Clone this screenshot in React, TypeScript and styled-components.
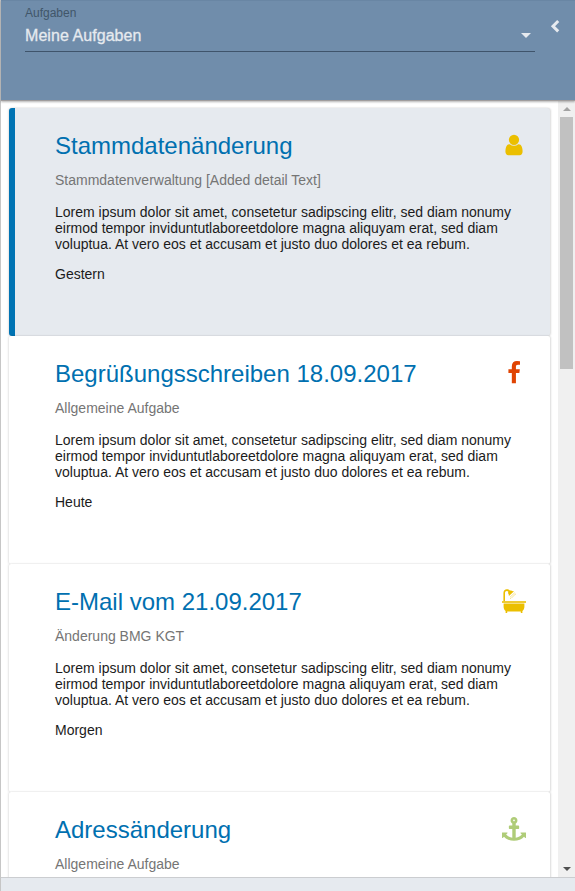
import React from "react";
import styled, { createGlobalStyle } from "styled-components";

const GlobalStyle = createGlobalStyle`
  *, *::before, *::after { box-sizing: border-box; }
  body { margin: 0; overflow: hidden; font-family: "Liberation Sans", Arial, sans-serif; }
`;

const Page = styled.div`
  display: flex;
  flex-direction: column;
  width: 575px;
  height: 891px;
  border-left: 1px solid #c6c6c6;
  background: #fff;
`;

const Header = styled.header`
  display: flex;
  flex: none;
  position: relative;
  height: 101px;
  padding-left: 24px;
  background: #708dab;
  border-top: 1px solid #6986a4;
  border-bottom: 1px solid #a09d9d;
  box-shadow: 0 1px 2px rgba(0, 0, 0, 0.3);
`;

const Select = styled.div`
  width: 510px;
  height: 51px;
  padding-top: 4px;
  border-bottom: 1px solid #3f546b;
`;

const SelectLabel = styled.div`
  font-size: 12px;
  line-height: 16px;
  color: #415669;
`;

const SelectValue = styled.div`
  display: flex;
  align-items: center;
  justify-content: space-between;
  height: 30px;
  padding-right: 4px;
  font-size: 16px;
  line-height: 20px;
  letter-spacing: 0.06px;
  color: #e6eaef;
  -webkit-text-stroke: 0.3px #e6eaef;
  svg { display: block; margin-bottom: 2px; }
`;

const Collapse = styled.button`
  width: 10px;
  height: 14px;
  margin: 18px 0 0 15px;
  padding: 0;
  border: 0;
  background: none;
  svg { display: block; }
`;

const Body = styled.main`
  display: flex;
  flex: none;
  height: 776px;
  overflow: hidden;
`;

const List = styled.div`
  width: 557px;
  height: 776px;
  padding: 7px 8px 0 8px;
  overflow: hidden;
`;

const Card = styled.article<{ $active?: boolean }>`
  display: flex;
  justify-content: space-between;
  height: 228px;
  padding: 22px 24px 0 ${(p) => (p.$active ? 40 : 46)}px;
  border-left: ${(p) => (p.$active ? "6px solid #0073b3" : "0")};
  border-radius: ${(p) => (p.$active ? "3px" : "2px")};
  background: ${(p) => (p.$active ? "#e6eaef" : "#fff")};
  box-shadow: 1px 0 2px rgba(0, 0, 0, 0.14), -1px 0 2px rgba(0, 0, 0, 0.1);
`;

const CardText = styled.div`
  flex: none;
  width: 466px;
`;

const Title = styled.h2`
  margin: 0;
  font-size: 24px;
  font-weight: 400;
  line-height: 32px;
  color: #0070b0;
  white-space: nowrap;
`;

const Category = styled.div`
  margin-top: 10px;
  font-size: 14px;
  line-height: 16px;
  color: #757575;
`;

const Description = styled.p`
  margin: 16px 0 14px;
  font-size: 14px;
  line-height: 16px;
  color: #1b1b1b;
  white-space: pre;
`;

const Due = styled.div`
  font-size: 14px;
  line-height: 16px;
  color: #1b1b1b;
`;

const IconSlot = styled.div<{ $color: string }>`
  flex: none;
  width: 24px;
  height: 24px;
  margin: 3px 0 0 -20px;
  color: ${(p) => p.$color};
  svg { display: block; overflow: visible; }
`;

const ScrollBar = styled.div`
  display: flex;
  flex-direction: column;
  align-items: center;
  width: 17px;
  height: 776px;
  background: #f0f0f0;
`;

const ScrollButton = styled.div`
  display: flex;
  flex: none;
  align-items: center;
  justify-content: center;
  width: 17px;
  height: 16px;
`;

const ScrollThumb = styled.div`
  width: 13px;
  height: 252px;
  margin-bottom: auto;
  background: #c1c1c1;
`;

const Footer = styled.footer`
  flex: 1;
  border-top: 1px solid #cbcdd0;
  background: #e6eaef;
`;

const Glyph = ({ d }: { d: string }) => (
  <svg width="24" height="24" viewBox="0 0 1792 1792" fill="currentColor">
    <path d={d} />
  </svg>
);

const UserIcon = () => (
  <Glyph d="M1536 1399q0 109-62.5 187t-150.5 78h-854q-88 0-150.5-78t-62.5-187q0-85 8.5-160.5t31.5-152 58.5-131 94-89 134.5-34.5q131 128 313 128t313-128q76 0 134.5 34.5t94 89 58.5 131 31.5 152 8.5 160.5zm-256-887q0 159-112.5 271.5t-271.5 112.5-271.5-112.5-112.5-271.5 112.5-271.5 271.5-112.5 271.5 112.5 112.5 271.5z" />
);

const FacebookIcon = () => (
  <Glyph d="M1343 12v264h-157q-86 0-116 36t-30 108v189h293l-39 296h-254v759h-306v-759h-255v-296h255v-218q0-186 104-288.5t277-102.5q147 0 228 12z" />
);

const AnchorIcon = () => (
  <Glyph d="M960 256q0-26-19-45t-45-19-45 19-19 45 19 45 45 19 45-19 19-45zm832 928v352q0 22-20 30-8 2-12 2-12 0-23-9l-93-93q-119 143-318.5 226.5t-429.5 83.5-429.5-83.5-318.5-226.5l-93 93q-9 9-23 9-4 0-12-2-20-8-20-30v-352q0-14 9-23t23-9h352q22 0 30 20 8 19-7 35l-100 100q67 91 189.5 153.5t271.5 82.5v-647h-192q-26 0-45-19t-19-45v-128q0-26 19-45t45-19h192v-163q-58-34-93-92.5t-35-128.5q0-106 75-181t181-75 181 75 75 181q0 70-35 128.5t-93 92.5v163h192q26 0 45 19t19 45v128q0 26-19 45t-45 19h-192v647q149-20 271.5-82.5t189.5-153.5l-100-100q-15-16-7-35 8-20 30-20h352q14 0 23 9t9 23z" />
);

const BathIcon = () => (
  <svg width="24" height="24" viewBox="0 0 24 24" fill="currentColor">
    <path d="M1.400 12.300V4C1.400 1.600 2.900.2 4.800.2c1.300 0 2.300.5 3 1.400 1.300-.3 2.300 0 3 .6l.5-.2.500.5-4.600 4.200-.6-.5.3-.5C6 4.800 5.900 3.600 6.400 2.700 6 2.200 5.500 1.900 4.800 1.900c-1.100 0-1.800.7-1.800 2v8.400z" />
    <path d="M0 12.200h24v1.600H0z" />
    <path d="M1.600 14.400h20.800v3.400c0 2-.8 3.300-2 4.200V24h-1.600v-1.400H5.200V24H3.600v-2c-1.200-.9-2-2.200-2-4.200z" />
    <path d="m8.300 8 4.500-4.300M9.700 8.800l4.300-4.300M8.500 9.600l.8-.8" fill="none" stroke="currentColor" strokeWidth=".75" strokeDasharray=".8 .6" />
  </svg>
);

const LOREM =
  "Lorem ipsum dolor sit amet, consetetur sadipscing elitr, sed diam nonumy\neirmod tempor inviduntutlaboreetdolore magna aliquyam erat, sed diam\nvoluptua. At vero eos et accusam et justo duo dolores et ea rebum.";

const TASKS = [
  { title: "Stammdatenänderung", category: "Stammdatenverwaltung [Added detail Text]", text: LOREM, due: "Gestern", color: "#ebbf00", Icon: UserIcon },
  { title: "Begrüßungsschreiben 18.09.2017", category: "Allgemeine Aufgabe", text: LOREM, due: "Heute", color: "#e04403", Icon: FacebookIcon },
  { title: "E-Mail vom 21.09.2017", category: "Änderung BMG KGT", text: LOREM, due: "Morgen", color: "#ebbf00", Icon: BathIcon },
  { title: "Adressänderung", category: "Allgemeine Aufgabe", color: "#afcc78", Icon: AnchorIcon },
];

export default function App() {
  return (
    <>
      <GlobalStyle />
      <Page>
        <Header>
          <Select>
            <SelectLabel>Aufgaben</SelectLabel>
            <SelectValue>
              Meine Aufgaben
              <svg width="10" height="5" viewBox="0 0 10 5">
                <path d="M0 0h10L5 5z" fill="#e6eaef" />
              </svg>
            </SelectValue>
          </Select>
          <Collapse aria-label="Einklappen">
            <svg width="10" height="14" viewBox="0 0 10 14">
              <path d="M8.200 2 3 7.200l5.200 5.200" fill="none" stroke="#e6eaef" strokeWidth="3" />
            </svg>
          </Collapse>
        </Header>
        <Body>
          <List>
            {TASKS.map(({ title, category, text, due, color, Icon }, i) => (
              <Card key={title} $active={i === 0}>
                <CardText>
                  <Title>{title}</Title>
                  <Category>{category}</Category>
                  {text && <Description>{text}</Description>}
                  {due && <Due>{due}</Due>}
                </CardText>
                <IconSlot $color={color}>
                  <Icon />
                </IconSlot>
              </Card>
            ))}
          </List>
          <ScrollBar>
            <ScrollButton>
              <svg width="8" height="4" viewBox="0 0 8 4">
                <path d="M0 4h8L4 0z" fill="#a3a3a3" />
              </svg>
            </ScrollButton>
            <ScrollThumb />
            <ScrollButton>
              <svg width="8" height="4" viewBox="0 0 8 4">
                <path d="M0 0h8L4 4z" fill="#505050" />
              </svg>
            </ScrollButton>
          </ScrollBar>
        </Body>
        <Footer />
      </Page>
    </>
  );
}
